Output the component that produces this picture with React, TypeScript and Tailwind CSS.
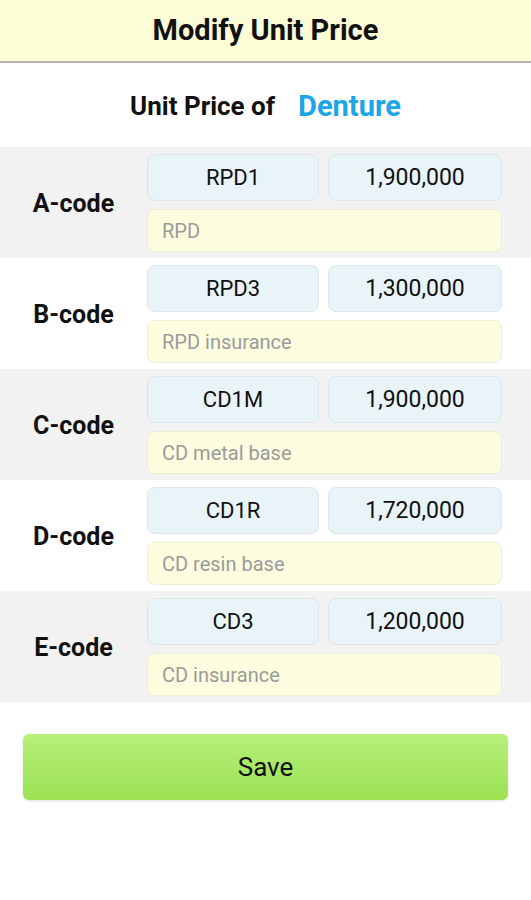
import React, { useState } from 'react';

interface PriceRow {
  label: string;
  code: string;
  price: string;
  desc: string;
}

const rows: PriceRow[] = [
  { label: 'A-code', code: 'RPD1', price: '1,900,000', desc: 'RPD' },
  { label: 'B-code', code: 'RPD3', price: '1,300,000', desc: 'RPD insurance' },
  { label: 'C-code', code: 'CD1M', price: '1,900,000', desc: 'CD metal base' },
  { label: 'D-code', code: 'CD1R', price: '1,720,000', desc: 'CD resin base' },
  { label: 'E-code', code: 'CD3', price: '1,200,000', desc: 'CD insurance' },
];

export default function App() {
  const [items, setItems] = useState(rows);

  const handleChange = (index: number, field: 'code' | 'price', value: string) => {
    setItems(prev => prev.map((item, i) => (i === index ? { ...item, [field]: value } : item)));
  };

  return (
    <div className="w-[531px] h-[900px] bg-white font-['Roboto',sans-serif] text-black">
      <div className="h-[63px] bg-[#fcfcd7] border-b-2 border-[#b5b5b5] flex items-center justify-center">
        <h1 className="text-[29px] font-bold text-[#111]">Modify Unit Price</h1>
      </div>

      <div className="h-[84px] flex items-center justify-center gap-[23px] pt-[3px]">
        <span className="text-[26px] font-bold text-[#111]">Unit Price of</span>
        <span className="text-[29px] font-bold text-[#1ca5e8]">Denture</span>
      </div>

      <div>
        {items.map((row, i) => (
          <div
            key={row.label}
            className={`flex h-[111px] ${i % 2 === 0 ? 'bg-[#f2f2f2]' : 'bg-white'}`}
          >
            <div className="w-[147px] shrink-0 whitespace-nowrap flex items-center justify-center pt-[3px] text-[25px] font-bold text-[#111]">
              {row.label}
            </div>
            <div className="flex-1 min-w-0 pr-[29px] pt-[7px] flex flex-col gap-[8px]">
              <div className="flex gap-[9px]">
                <input
                  value={row.code}
                  onChange={e => handleChange(i, 'code', e.target.value)}
                  className="w-[172px] h-[47px] rounded-lg bg-[#e8f4f8] border border-[#dde6ea] text-center text-[22px] text-[#111] outline-none"
                />
                <input
                  value={row.price}
                  onChange={e => handleChange(i, 'price', e.target.value)}
                  className="flex-1 min-w-0 h-[47px] rounded-lg bg-[#e8f4f8] border border-[#dde6ea] text-center text-[23px] text-[#111] outline-none"
                />
              </div>
              <input
                placeholder={row.desc}
                className="h-[43px] rounded-lg bg-[#fdfddf] border border-[#eeeed0] px-[14px] text-[20px] placeholder:text-[#9b9b9b] outline-none"
              />
            </div>
          </div>
        ))}
      </div>

      <div className="px-[23px] pt-[32px]">
        <button className="w-full h-[66px] rounded-md bg-gradient-to-b from-[#b6f079] to-[#9ce152] text-[26px] text-[#111] shadow-sm">
          Save
        </button>
      </div>
    </div>
  );
}
